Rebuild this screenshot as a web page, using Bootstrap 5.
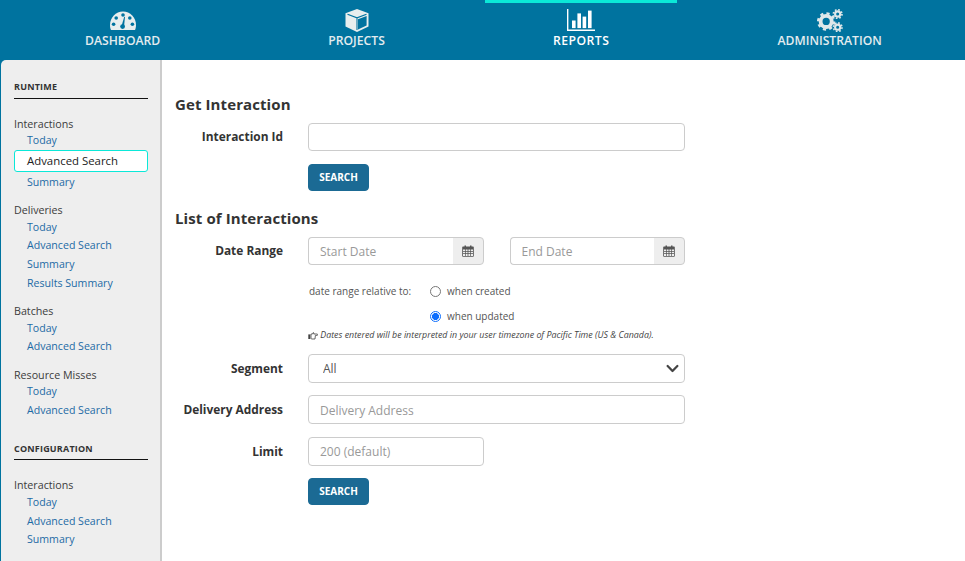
<!DOCTYPE html>
<html lang="en">
<head>
<meta charset="utf-8">
<title>Reports</title>
<link rel="stylesheet" href="https://cdn.jsdelivr.net/npm/bootstrap@5.3.0/dist/css/bootstrap.min.css">
<style>
html,body{height:561px;overflow:hidden}
body{font-family:"Open Sans","Liberation Sans",sans-serif;color:#333;background:#fff;font-size:12px}
.topbar{height:60px;background:#00739f;padding-left:17.5px;gap:33px}
.topitem{padding:0 67.5px;height:60px;color:#e3ecef;font-size:12px;font-weight:600;text-decoration:none;text-transform:uppercase;border-top:3px solid transparent;white-space:nowrap}
.topitem:hover{color:#e3ecef}
.topitem.is-on{border-top-color:#0be8d8;color:#fff;letter-spacing:.5px}
.topicon{height:23px;margin-top:6px}
.toplabel{line-height:17px;font-size:12.2px}
.shell{height:501px}
.sidewrap{width:162px;background:#00739f;padding-left:1px;flex:none}
.sidebar{height:100%;background:#eee;border-right:2px solid #ccc;border-top-left-radius:5px;padding:20px 12px 0 13px;overflow:hidden}
.sect-title{font-size:9px;font-weight:700;letter-spacing:.2px;line-height:14px;padding-bottom:4px;border-bottom:1px solid #111;color:#333;margin:0}
.sect-title.next{margin-top:22.3px;padding-bottom:3px}
.grp{margin-top:13px}
.grp.first{margin-top:18.8px}
.grp-head{height:13.4px;line-height:13.4px;color:#3c3c3c;font-size:10.7px}
.sidelink{display:block;height:18.65px;line-height:18.65px;padding-left:13px;color:#1d6aa5;text-decoration:none;font-size:10.6px;white-space:nowrap}
.sidelink.is-on{height:22px;line-height:20px;background:#fff;border:1px solid #0be8d8;border-radius:3px;color:#222;font-size:11.4px;padding-left:12px;margin:.6px 0 .4px}
.grp.cfg .grp-head{margin-bottom:.8px}
.content{padding-left:13px;width:560px}
.sec-h{font-size:15px;font-weight:700;letter-spacing:.1px;color:#333;margin:0;line-height:20px}
.frow{display:flex;align-items:center}
.flabel{width:108px;margin-right:25px;text-align:right;font-weight:700;font-size:11.9px;color:#333;flex:none;margin-bottom:0}
.finp{width:377px;height:28px;min-height:0;font-size:12px;padding:0 11px;border:1px solid #ccc;border-radius:4px;color:#555}
.finp::placeholder{color:#999}
.finp-sm{width:176px;height:29px}
.tall{height:29px}
.pad-low{padding-top:1px}
.go-btn{margin-left:133px;width:61px;height:27px;padding:0;background:#1b6a94;border:1px solid #1b6a94;color:#fff;font-size:10px;font-weight:700;border-radius:4px;display:block}
.go-btn:hover{background:#1b6a94;border-color:#1b6a94;color:#fff}
.datebox{width:176px;flex:none;flex-wrap:nowrap}
.datebox .finp{width:auto;flex:1;border-right:0;height:28px;border-top-right-radius:0;border-bottom-right-radius:0}
.datebox .input-group-text{width:32px;height:28px;padding:0;justify-content:center;background:#eee;border:1px solid #ccc;border-radius:0 4px 4px 0}
.datebox.second{width:175.5px;margin-left:25.5px}
.reltxt{font-size:10px;color:#444;width:122px;margin-left:133px;flex:none;padding-left:1px}
.radline{height:25px;font-size:10px;color:#555}
.radline .form-check-input{width:11px;height:11px;margin:0 6px 0 0;border-color:#777;flex:none}
.radline .form-check-input:checked{background-color:#fff;background-image:radial-gradient(circle,#0d6efd 0,#0d6efd 3.2px,#fff 3.8px);border-color:#0d6efd;border-width:1.5px}
.radline label{margin:0}
.tznote{margin-left:133px;font-size:8.85px;font-style:italic;color:#444;line-height:12px;white-space:nowrap}
.finp.form-select{padding:0 30px 0 14px;background-image:url("data:image/svg+xml,%3csvg xmlns='http://www.w3.org/2000/svg' viewBox='0 0 16 16'%3e%3cpath fill='none' stroke='%23444' stroke-linecap='round' stroke-linejoin='round' stroke-width='2.8' d='m2 5 6 6 6-6'/%3e%3c/svg%3e");background-position:right 5px center;background-size:13px 13px}
.mt-form1{margin-top:34px}
.sp1{margin-top:9px}
.sp2{margin-top:13px}
.sp3{margin-top:17px}
.sp4{margin-top:9px}
.sp5{margin-top:14px}
.sp6{margin-top:13px}
.sp7{margin-top:12px}
.sp8{margin-top:13px}
.sp9{margin-top:12px}
</style>
</head>
<body>
<nav class="topbar d-flex">
  <a class="topitem d-flex flex-column align-items-center" href="#">
    <svg class="topicon" width="26" height="23" viewBox="0 0 26 23" aria-hidden="true"><path fill="#e8eeee" d="M1 21 C.4 19.7 0 18 0 16 C0 8.8 5.8 2.5 13 2.5 S26 8.8 26 16 C26 18 25.6 19.7 25 21 Z"/><g fill="#00739f"><circle cx="13" cy="6" r="1.8"/><circle cx="6.2" cy="9" r="1.8"/><circle cx="19.8" cy="9" r="1.8"/><circle cx="3.6" cy="15.2" r="1.8"/><circle cx="22.4" cy="15.2" r="1.8"/><circle cx="12.6" cy="17.6" r="2.4"/><path d="M11.6 17 L14.2 7.8 L15 8 L14 17.6 Z"/></g></svg>
    <span class="toplabel">Dashboard</span>
  </a>
  <a class="topitem d-flex flex-column align-items-center" href="#">
    <svg class="topicon" width="24" height="23" viewBox="0 0 24 23" aria-hidden="true"><path fill="#e8eeee" d="M12 0 L23.5 4.2 V17.6 L12 23 L.5 17.6 V4.2 Z"/><path fill="#00739f" d="M13 10.2 L21.6 7 V16.4 L13 20.4 Z"/><path fill="none" stroke="#00739f" stroke-width="1.1" d="M2.5 5.2 L12 8.8 L21.5 5.2 M12 8.8 V21"/></svg>
    <span class="toplabel">Projects</span>
  </a>
  <a class="topitem is-on d-flex flex-column align-items-center" href="#">
    <svg class="topicon" width="28" height="23" viewBox="0 0 28 23" aria-hidden="true"><g fill="#fff"><path d="M0 0 H1.4 V20.6 H28 V22 H0 Z"/><rect x="5" y="11.5" width="3.6" height="7.6"/><rect x="10.4" y="4.4" width="3.6" height="14.7"/><rect x="15.6" y="7.6" width="3.6" height="11.5"/><rect x="21" y="1.6" width="3.6" height="17.5"/></g></svg>
    <span class="toplabel">Reports</span>
  </a>
  <a class="topitem d-flex flex-column align-items-center" href="#">
    <svg class="topicon" width="28" height="24" viewBox="0 0 28 24" aria-hidden="true"><g fill="none" stroke="#dfe8ea"><circle cx="10" cy="13" r="5.8" stroke-width="4"/><circle cx="10" cy="13" r="8.4" stroke-width="2.4" stroke-dasharray="3.3 3.3"/><circle cx="22" cy="5.2" r="2.7" stroke-width="2.2"/><circle cx="22" cy="5.2" r="4.5" stroke-width="1.7" stroke-dasharray="1.75 1.78"/><circle cx="22" cy="19" r="2.7" stroke-width="2.2"/><circle cx="22" cy="19" r="4.5" stroke-width="1.7" stroke-dasharray="1.75 1.78"/></g></svg>
    <span class="toplabel">Administration</span>
  </a>
</nav>
<div class="shell d-flex">
  <div class="sidewrap">
    <aside class="sidebar">
      <h6 class="sect-title">RUNTIME</h6>
      <div class="grp first">
        <div class="grp-head">Interactions</div>
        <a class="sidelink" href="#">Today</a>
        <a class="sidelink is-on" href="#">Advanced Search</a>
        <a class="sidelink" href="#">Summary</a>
      </div>
      <div class="grp">
        <div class="grp-head">Deliveries</div>
        <a class="sidelink" href="#">Today</a>
        <a class="sidelink" href="#">Advanced Search</a>
        <a class="sidelink" href="#">Summary</a>
        <a class="sidelink" href="#">Results Summary</a>
      </div>
      <div class="grp">
        <div class="grp-head">Batches</div>
        <a class="sidelink" href="#">Today</a>
        <a class="sidelink" href="#">Advanced Search</a>
      </div>
      <div class="grp">
        <div class="grp-head">Resource Misses</div>
        <a class="sidelink" href="#">Today</a>
        <a class="sidelink" href="#">Advanced Search</a>
      </div>
      <h6 class="sect-title next">CONFIGURATION</h6>
      <div class="grp first cfg">
        <div class="grp-head">Interactions</div>
        <a class="sidelink" href="#">Today</a>
        <a class="sidelink" href="#">Advanced Search</a>
        <a class="sidelink" href="#">Summary</a>
      </div>
    </aside>
  </div>
  <main class="content">
    <h5 class="sec-h mt-form1">Get Interaction</h5>
    <div class="frow sp1">
      <label class="flabel">Interaction Id</label>
      <input class="form-control finp" type="text">
    </div>
    <button class="btn go-btn sp2" type="button">SEARCH</button>
    <h5 class="sec-h sp3">List of Interactions</h5>
    <div class="frow sp4">
      <label class="flabel">Date Range</label>
      <div class="input-group datebox">
        <input class="form-control finp" type="text" placeholder="Start Date">
        <span class="input-group-text"><svg width="12" height="12" viewBox="0 0 12 12" aria-hidden="true"><path fill="#555" d="M1 1.5 H2.5 V.5 H4 V1.5 H8 V.5 H9.5 V1.5 H11 A.8 .8 0 0 1 11.8 2.3 V11 A.8 .8 0 0 1 11 11.8 H1 A.8 .8 0 0 1 .2 11 V2.3 A.8 .8 0 0 1 1 1.5 Z M1 4.4 V6 H3 V4.4 Z M3.7 4.4 V6 H5.6 V4.4 Z M6.4 4.4 V6 H8.3 V4.4 Z M9 4.4 V6 H11 V4.4 Z M1 6.7 V8.3 H3 V6.7 Z M3.7 6.7 V8.3 H5.6 V6.7 Z M6.4 6.7 V8.3 H8.3 V6.7 Z M9 6.7 V8.3 H11 V6.7 Z M1 9 V11 H3 V9 Z M3.7 9 V11 H5.6 V9 Z M6.4 9 V11 H8.3 V9 Z M9 9 V11 H11 V9 Z" fill-rule="evenodd"/></svg></span>
      </div>
      <div class="input-group datebox second">
        <input class="form-control finp" type="text" placeholder="End Date">
        <span class="input-group-text"><svg width="12" height="12" viewBox="0 0 12 12" aria-hidden="true"><path fill="#555" d="M1 1.5 H2.5 V.5 H4 V1.5 H8 V.5 H9.5 V1.5 H11 A.8 .8 0 0 1 11.8 2.3 V11 A.8 .8 0 0 1 11 11.8 H1 A.8 .8 0 0 1 .2 11 V2.3 A.8 .8 0 0 1 1 1.5 Z M1 4.4 V6 H3 V4.4 Z M3.7 4.4 V6 H5.6 V4.4 Z M6.4 4.4 V6 H8.3 V4.4 Z M9 4.4 V6 H11 V4.4 Z M1 6.7 V8.3 H3 V6.7 Z M3.7 6.7 V8.3 H5.6 V6.7 Z M6.4 6.7 V8.3 H8.3 V6.7 Z M9 6.7 V8.3 H11 V6.7 Z M1 9 V11 H3 V9 Z M3.7 9 V11 H5.6 V9 Z M6.4 9 V11 H8.3 V9 Z M9 9 V11 H11 V9 Z" fill-rule="evenodd"/></svg></span>
      </div>
    </div>
    <div class="d-flex sp5">
      <div class="reltxt radline d-flex align-items-center">date range relative to:</div>
      <div>
        <div class="radline d-flex align-items-center"><input class="form-check-input mt-0" type="radio" name="rel" id="r1"><label for="r1">when created</label></div>
        <div class="radline d-flex align-items-center"><input class="form-check-input mt-0" type="radio" name="rel" id="r2" checked><label for="r2">when updated</label></div>
      </div>
    </div>
    <div class="tznote"><svg width="10" height="8" viewBox="0 0 10 8" aria-hidden="true"><path fill="none" stroke="#444" stroke-width=".8" d="M3 2 H4.5 L5.2 .6 L6 1 L5.7 2 H9 A.6 .6 0 0 1 9 3.4 H7.4 L7 7 H3.4 L3 6.2 Z"/><rect x=".3" y="2.4" width="2" height="4.6" fill="#444"/></svg> Dates entered will be interpreted in your user timezone of Pacific Time (US &amp; Canada).</div>
    <div class="frow sp6">
      <label class="flabel">Segment</label>
      <select class="form-select finp tall"><option>All</option></select>
    </div>
    <div class="frow sp7">
      <label class="flabel">Delivery Address</label>
      <input class="form-control finp tall pad-low" type="text" placeholder="Delivery Address">
    </div>
    <div class="frow sp8">
      <label class="flabel">Limit</label>
      <input class="form-control finp finp-sm" type="text" placeholder="200 (default)">
    </div>
    <button class="btn go-btn sp9" type="button">SEARCH</button>
  </main>
</div>
</body>
</html>
